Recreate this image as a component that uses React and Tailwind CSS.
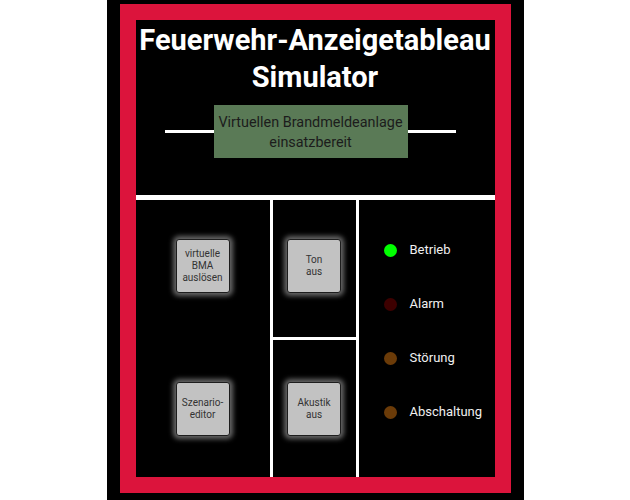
import React from "react";

const font = { fontFamily: "Roboto, 'Noto Sans', sans-serif" };

function PanelButton({ lines }) {
  return (
    <button className="w-[54px] h-[54px] bg-[#c2c2c2] border border-[#1e1e1e] rounded-[3px] shadow-[0_0_5px_3px_rgba(140,140,140,0.75)] flex flex-col items-center justify-center text-[10px] leading-[12px] text-[#333]">
      {lines.map((l) => (
        <span key={l}>{l}</span>
      ))}
    </button>
  );
}

function Led({ color, label }) {
  return (
    <div className="h-[20px] flex items-center pl-[25px]">
      <span className={`w-[13px] h-[13px] rounded-full ${color}`} />
      <span className="ml-[13px] text-[13px] text-[#f0f0f0]">{label}</span>
    </div>
  );
}

export default function App() {
  return (
    <div className="min-h-screen bg-white" style={font}>
      <div className="mx-auto w-[417px] h-[500px] bg-black px-[13px] pt-[4px]">
        <div className="h-[489px] border-[16px] border-[#dc143c] bg-black flex flex-col">
          {/* Header */}
          <div className="h-[175px] flex flex-col items-center pt-[2px]">
            <h1 className="text-[29px] leading-[37px] font-bold text-white text-center">
              Feuerwehr-Anzeigetableau
              <br />
              Simulator
            </h1>
            <div className="mt-[9px] w-full flex items-center pl-[29px]">
              <div className="w-[49px] h-[3px] bg-white" />
              <div className="w-[194px] h-[53px] bg-[#5a7a56] pt-[8px] pb-[5px] text-center text-[14.4px] leading-[20px] text-[#1c1c1c]">
                Virtuellen Brandmeldeanlage
                <br />
                einsatzbereit
              </div>
              <div className="w-[48px] h-[3px] bg-white" />
            </div>
          </div>

          <div className="h-[5px] bg-white" />

          {/* Panel */}
          <div className="flex-1 flex">
            <div className="w-[134px] flex flex-col">
              <div className="h-[137px] pb-[6px] flex items-center justify-center">
                <PanelButton lines={["virtuelle", "BMA", "auslösen"]} />
              </div>
              <div className="h-[3px]" />
              <div className="flex-1 flex items-center justify-center">
                <PanelButton lines={["Szenario-", "editor"]} />
              </div>
            </div>
            <div className="w-[3px] bg-white" />
            <div className="w-[83px] flex flex-col">
              <div className="h-[137px] pb-[6px] flex items-center justify-center">
                <PanelButton lines={["Ton", "aus"]} />
              </div>
              <div className="h-[3px] bg-white" />
              <div className="flex-1 flex items-center justify-center">
                <PanelButton lines={["Akustik", "aus"]} />
              </div>
            </div>
            <div className="w-[3px] bg-white" />
            <div className="flex-1 flex flex-col pt-[40px] gap-[34px]">
              <Led color="bg-[#00ff00]" label="Betrieb" />
              <Led color="bg-[#3d0000]" label="Alarm" />
              <Led color="bg-[#6b3b08]" label="Störung" />
              <Led color="bg-[#6b3b08]" label="Abschaltung" />
            </div>
          </div>
        </div>
      </div>
    </div>
  );
}
